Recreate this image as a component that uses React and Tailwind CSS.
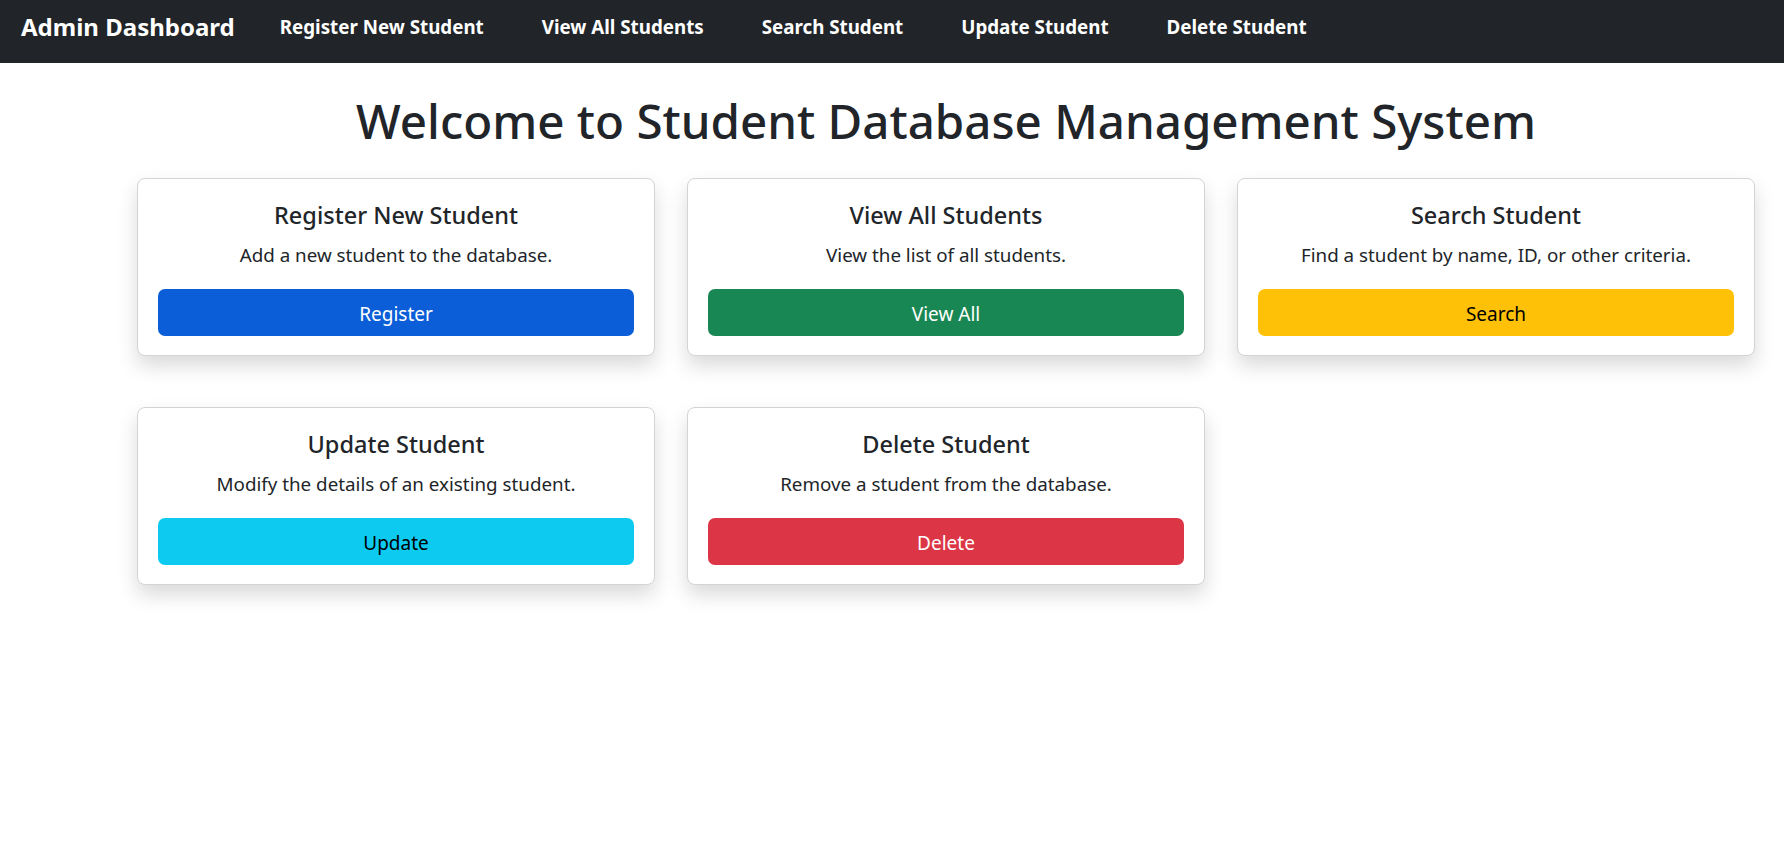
const navLinks = [
  "Register New Student",
  "View All Students",
  "Search Student",
  "Update Student",
  "Delete Student",
];

const cards = [
  {
    title: "Register New Student",
    text: "Add a new student to the database.",
    label: "Register",
    btn: "bg-[#0b5ed7] text-white",
  },
  {
    title: "View All Students",
    text: "View the list of all students.",
    label: "View All",
    btn: "bg-[#198754] text-white",
  },
  {
    title: "Search Student",
    text: "Find a student by name, ID, or other criteria.",
    label: "Search",
    btn: "bg-[#ffc107] text-black",
  },
  {
    title: "Update Student",
    text: "Modify the details of an existing student.",
    label: "Update",
    btn: "bg-[#0dcaf0] text-black",
  },
  {
    title: "Delete Student",
    text: "Remove a student from the database.",
    label: "Delete",
    btn: "bg-[#dc3545] text-white",
  },
];

function Card({ title, text, label, btn }) {
  return (
    <div className="bg-white border border-[#d3d4d5] rounded-[8px] shadow-[0_10px_20px_rgba(0,0,0,0.15)] px-[20px] pt-[21px] pb-[19px] text-center">
      <h5 className="text-[23.5px] leading-[30px] font-medium text-[#212529] mb-[10px]">{title}</h5>
      <p className="text-[18.8px] leading-[30px] text-[#212529] mb-[19px]">{text}</p>
      <button className={`w-full h-[47px] pt-[3px] rounded-[7px] text-[19px] ${btn}`}>{label}</button>
    </div>
  );
}

export default function App() {
  return (
    <div className="min-h-screen bg-white font-['Noto_Sans',sans-serif]">
      {/* Navbar */}
      <nav className="h-[63px] bg-[#212529] flex items-start pt-[9px] px-[21px]">
        <span className="text-white text-[24px] leading-[36px] font-bold mr-[45px]">Admin Dashboard</span>
        <div className="flex gap-[58px] pt-[2px]">
          {navLinks.map((l) => (
            <span key={l} className="text-white text-[18.75px] leading-[32px] font-bold">
              {l}
            </span>
          ))}
        </div>
      </nav>

      {/* Main */}
      <div className="pl-[137px] pr-[29px]">
        <h1 className="text-center text-[47.5px] leading-[60px] font-medium text-[#212529] mt-[28px] mb-[27px]">
          Welcome to Student Database Management System
        </h1>
        <div className="grid grid-cols-[518px_518px_518px] gap-x-[32px] gap-y-[51px]">
          {cards.map((c) => (
            <Card key={c.title} {...c} />
          ))}
        </div>
      </div>
    </div>
  );
}
